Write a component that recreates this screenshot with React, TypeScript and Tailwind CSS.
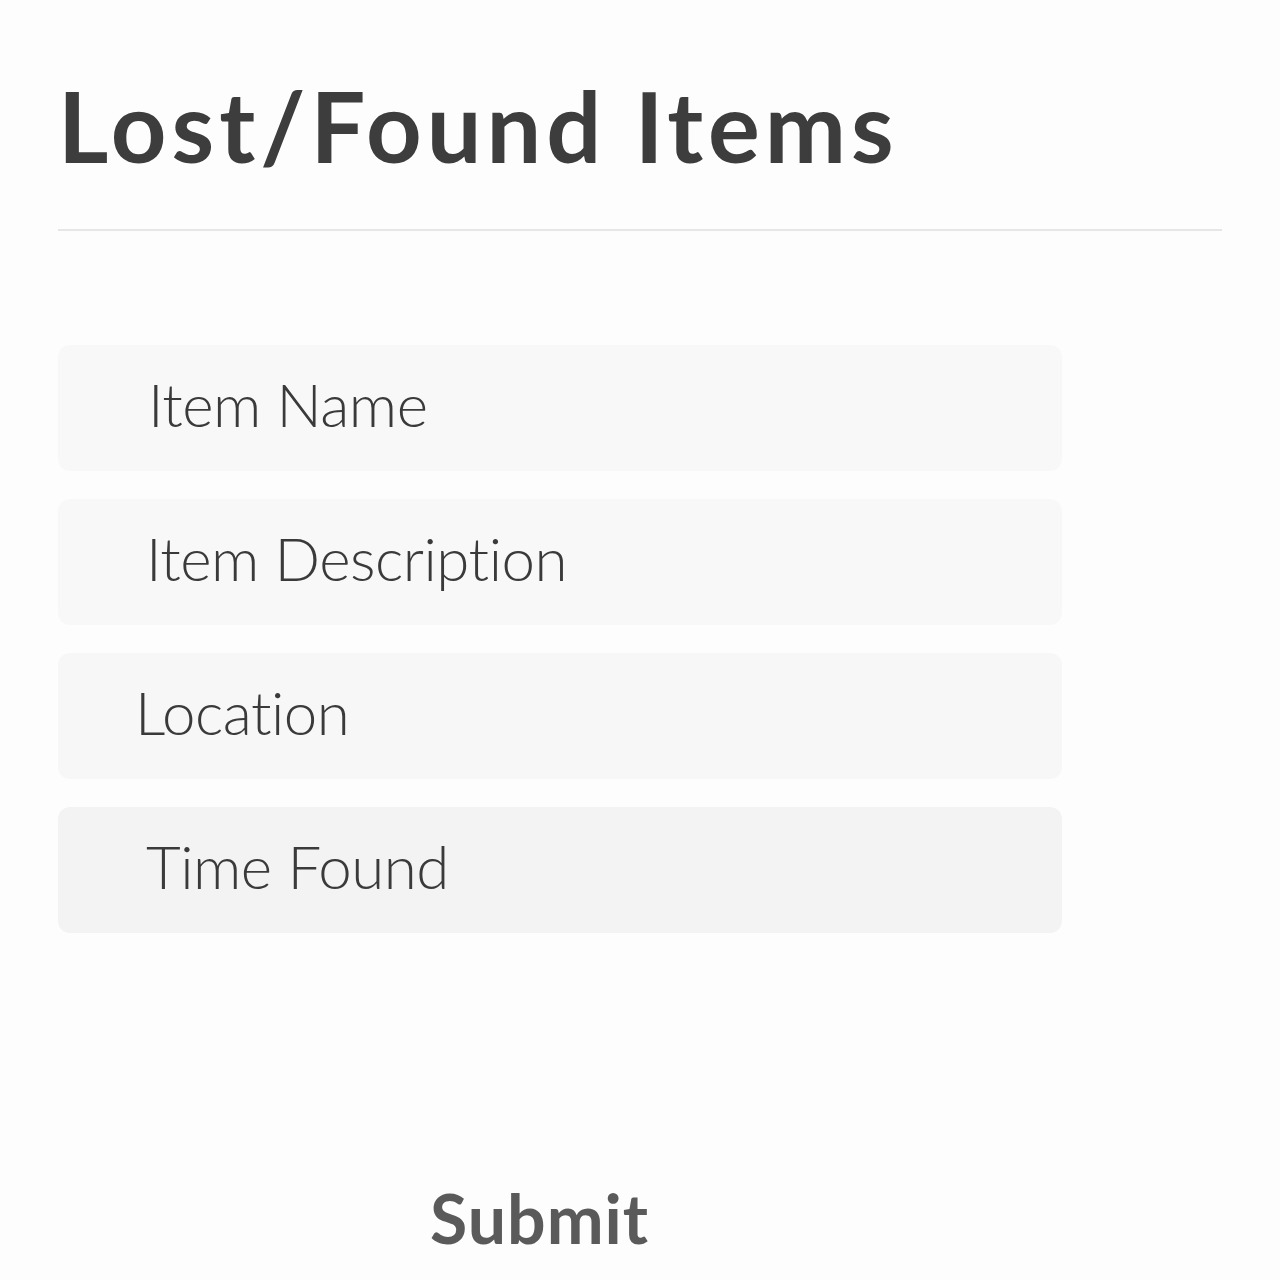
export default function App() {
  const fields = [
    { label: "Item Name", pl: "pl-[90px]", bg: "bg-[#f8f8f8]" },
    { label: "Item Description", pl: "pl-[88px]", bg: "bg-[#f8f8f8]" },
    { label: "Location", pl: "pl-[77px]", bg: "bg-[#f7f7f7]" },
    { label: "Time Found", pl: "pl-[88px]", bg: "bg-[#f3f3f3]" },
  ];
  return (
    <div className="w-[1280px] h-[1280px] bg-[#fdfdfd] overflow-hidden flex flex-col" style={{ fontFamily: "Lato, 'Open Sans', sans-serif" }}>
      <div className="pl-[58px] pr-[58px] pt-[71px]">
        <h1 className="text-[97px] leading-[110px] font-bold text-[#3d3d3d] tracking-[5px]">Lost/Found Items</h1>
        <div className="mt-[48px] h-[2px] bg-[#e6e6e6]" />
      </div>
      <div className="pl-[58px] mt-[114px] flex flex-col gap-[28px]">
        {fields.map((f) => (
          <div key={f.label} className={`w-[1004px] h-[126px] rounded-[12px] ${f.bg} flex items-center pb-[8px] ${f.pl}`}>
            <span className="text-[60px] font-light text-[#3a3a3a] tracking-[-0.5px]">{f.label}</span>
          </div>
        ))}
      </div>
      <div className="mt-[234px] pl-[430px]">
        <span className="text-[68px] font-bold text-[#5a5a5a] tracking-[1px]">Submit</span>
      </div>
    </div>
  );
}
